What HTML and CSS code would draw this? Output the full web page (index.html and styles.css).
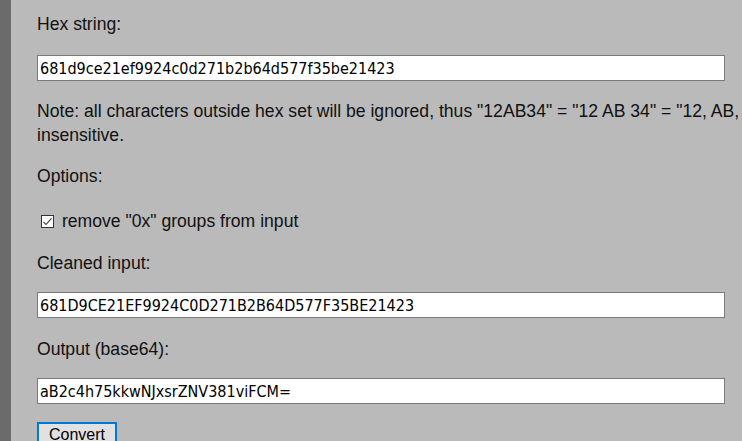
FILE: index.html
```html
<!DOCTYPE html>
<html>
<head>
<meta charset="utf-8">
<link rel="stylesheet" href="styles.css">
</head>
<body>
<div class="page">
  <div class="side"></div>
  <main class="content">
    <div class="label">Hex string:</div>
    <input class="field first" type="text" value="681d9ce21ef9924c0d271b2b64d577f35be21423">
    <p class="note">Note: all characters outside hex set will be ignored, thus "12AB34" = "12 AB 34" = "12, AB, 34" = "0x12, 0xAB, 0x34". Input is case<br>insensitive.</p>
    <div class="label">Options:</div>
    <label class="opt"><span class="box"><svg width="11" height="11" viewBox="0 0 11 11"><path d="M1.5 5.8 L4 8.5 L9.5 2.3" fill="none" stroke="#333" stroke-width="1.1"/></svg></span> remove "0x" groups from input</label>
    <div class="label">Cleaned input:</div>
    <input class="field" type="text" value="681D9CE21EF9924C0D271B2B64D577F35BE21423">
    <div class="label out">Output (base64):</div>
    <input class="field" type="text" value="aB2c4h75kkwNJxsrZNV381viFCM=">
    <div><button class="btn">Convert</button></div>
  </main>
</div>
</body>
</html>
```
FILE: styles.css
```css
html, body {
  margin: 0;
  padding: 0;
  background: #bababa;
  overflow: hidden;
}
.page {
  display: flex;
  min-height: 441px;
}
.side {
  width: 11px;
  flex: none;
  background: #6b6b6b;
}
.content {
  flex: none;
  width: 1000px;
  padding: 12px 0 0 26px;
  display: flex;
  flex-direction: column;
  align-items: flex-start;
  font-family: "Liberation Sans", Arial, sans-serif;
  font-size: 17.6px;
  line-height: 24px;
  color: #111;
}
.label {
  white-space: nowrap;
}
.label.out {
  margin-top: 1px;
}
.field {
  box-sizing: border-box;
  width: 688px;
  height: 26px;
  margin: 17px 0 18px 0;
  padding: 0 2px;
  border: 1px solid #7a7a7a;
  background: #fff;
  font-family: "DejaVu Sans Condensed", "DejaVu Sans", sans-serif;
  font-stretch: condensed;
  font-size: 16px;
  color: #000;
  outline: none;
}
.field.first {
  margin-top: 19px;
}
.note {
  margin: 0 0 17px 0;
  white-space: nowrap;
}
.opt {
  display: block;
  margin: 21px 0 18px 0;
  white-space: nowrap;
}
.box {
  box-sizing: border-box;
  display: inline-flex;
  width: 13px;
  height: 13px;
  margin: 0 3px 3px 4px;
  vertical-align: baseline;
  border: 1px solid #333;
  background: #fff;
}
.btn {
  margin: 0;
  padding: 1px 10px;
  border: 2px solid #0078d7;
  background: #e1e1e1;
  font-family: "Liberation Sans", Arial, sans-serif;
  font-size: 16px;
  line-height: 20px;
  color: #000;
  border-radius: 0;
}
```
